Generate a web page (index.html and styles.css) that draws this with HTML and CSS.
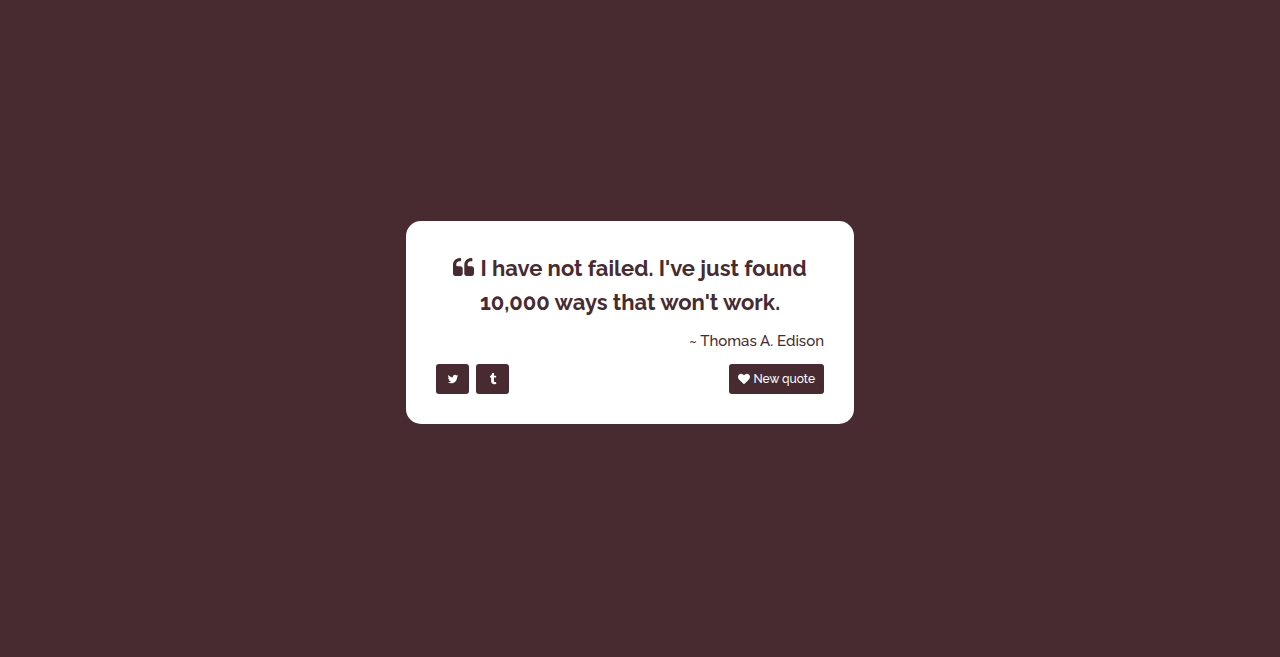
FILE: index.html
```html
<!DOCTYPE html>
<html lang="en">
<head>
<meta charset="utf-8">
<meta name="viewport" content="width=device-width, initial-scale=1">
<title>Random Quote Machine</title>
<link rel="stylesheet" href="styles.css">
</head>
<body>
<main class="quote-box">
  <blockquote class="quote-text"><svg class="icon-quote" viewBox="64 128 1664 1408" aria-hidden="true"><path d="M832 960v384q0 80-56 136t-136 56h-384q-80 0-136-56t-56-136v-704q0-104 40.500-198.500t109.500-163.500 163.500-109.500 198.500-40.500h64q26 0 45 19t19 45v128q0 26-19 45t-45 19h-64q-106 0-181 75t-75 181v32q0 40 28 68t68 28h224q80 0 136 56t56 136zm896 0v384q0 80-56 136t-136 56h-384q-80 0-136-56t-56-136v-704q0-104 40.500-198.500t109.500-163.500 163.500-109.500 198.500-40.500h64q26 0 45 19t19 45v128q0 26-19 45t-45 19h-64q-106 0-181 75t-75 181v32q0 40 28 68t68 28h224q80 0 136 56t56 136z"/></svg>I have not failed. I've just found 10,000 ways that won't work.</blockquote>
  <p class="quote-author">~ Thomas A. Edison</p>
  <div class="actions">
    <a class="button share" href="#" aria-label="Tweet this quote"><svg class="icon" viewBox="0 0 1792 1792" aria-hidden="true"><path d="M1684 408q-67 98-162 167 1 14 1 42 0 130-38 259.500t-115.500 248.500-184.500 210.500-258 146-323 54.500q-271 0-496-145 35 4 78 4 225 0 401-138-105-2-188-64.500t-114-159.500q33 5 61 5 43 0 85-11-112-23-185.500-111.500t-73.500-205.500v-4q68 38 146 41-66-44-105-115t-39-154q0-88 44-163 121 149 294.500 238.500t371.500 99.500q-8-38-8-74 0-134 94.500-228.500t228.500-94.500q140 0 236 102 109-21 205-78-37 115-142 178 93-10 186-50z"/></svg></a>
    <a class="button share" href="#" aria-label="Post this quote on Tumblr"><svg class="icon" viewBox="0 0 1792 1792" aria-hidden="true"><path d="M1328 1329l80 237q-23 35-111 66t-177 32q-104 2-190.500-26t-142.500-74-95-106-55.500-120-16.500-118v-544h-168v-215q72-26 129-69.500t91-90 58-102 34-99 15-88.500q1-5 4.500-8.500t7.500-3.500h244v424h333v252h-334v518q0 30 6.500 56t22.500 52.500 49.500 41.500 81.500 14q78-2 134-29z"/></svg></a>
    <button class="button new-quote" type="button"><svg class="icon" viewBox="0 0 1792 1792" aria-hidden="true"><path d="M896 1664q-26 0-44-18l-624-602q-10-8-27.500-26t-55.500-65.500-68-97.500-53.500-121-23.500-138q0-220 127-344t351-124q62 0 126.500 21.500t120 58 95.500 68.500 76 68q36-36 76-68t95.500-68.500 120-58 126.500-21.500q224 0 351 124t127 344q0 221-229 450l-623 600q-18 18-44 18z"/></svg>New quote</button>
  </div>
</main>
</body>
</html>
```
FILE: styles.css
```css
:root {
  --theme: #472b30;
}

* {
  box-sizing: border-box;
}

body {
  display: flex;
  align-items: center;
  justify-content: center;
  min-height: 100vh;
  margin: 0;
  padding: 0 20px 12px 0;
  background: var(--theme);
  color: var(--theme);
  font-family: Raleway, Lato, sans-serif;
}

.quote-box {
  width: 448px;
  max-width: 100%;
  padding: 30px;
  border-radius: 15px;
  background: #fff;
}

.quote-text {
  margin: 0;
  font-size: 22px;
  font-weight: 700;
  line-height: 34px;
  text-align: center;
}

.icon-quote {
  width: 21px;
  height: 18px;
  margin-right: 6px;
  vertical-align: 0;
  fill: currentColor;
}

.quote-author {
  margin: 11px 0;
  font-size: 15px;
  font-weight: 500;
  line-height: 23px;
  text-align: right;
}

.actions {
  display: flex;
  gap: 7px;
}

.button {
  display: flex;
  align-items: center;
  justify-content: center;
  height: 30px;
  padding: 0 9px;
  border: 0;
  border-radius: 3px;
  background: var(--theme);
  color: #fff;
  font: 500 12px Raleway, Lato, sans-serif;
  text-decoration: none;
  cursor: pointer;
}

.share {
  width: 33px;
}

.new-quote {
  gap: 3px;
  margin-left: auto;
}

.icon {
  width: 12px;
  height: 12px;
  flex: none;
  fill: currentColor;
}
```
